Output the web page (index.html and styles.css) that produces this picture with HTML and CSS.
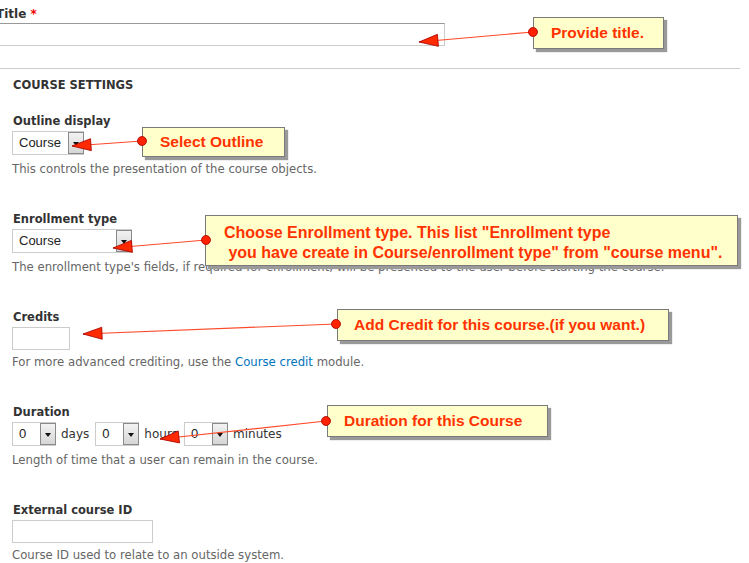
FILE: index.html
```html
<!DOCTYPE html>
<html lang="en">
<head>
    <meta charset="UTF-8">
    <title>Course settings</title>
    <link rel="stylesheet" href="styles.css">
</head>
<body>
    <div class="page">
        <div class="title-item">
            <label class="title-label">Title <span class="req">*</span></label>
            <input type="text" class="text title-input">
        </div>

        <div class="settings">
            <div class="legend">Course settings</div>

            <div class="form-item">
                <label class="label">Outline display</label>
                <div class="select select-small">
                    <span class="select-value">Course</span>
                    <span class="select-button"></span>
                </div>
                <div class="description">This controls the presentation of the course objects.</div>
            </div>

            <div class="form-item">
                <label class="label">Enrollment type</label>
                <div class="select select-wide">
                    <span class="select-value">Course</span>
                    <span class="select-button"></span>
                </div>
                <div class="description">The enrollment type's fields, if required for enrollment, will be presented to the user before starting the course.</div>
            </div>

            <div class="form-item form-item-text">
                <label class="label">Credits</label>
                <input type="text" class="text credits-input">
                <div class="description">For more advanced crediting, use the <a href="#">Course credit</a> module.</div>
            </div>

            <div class="form-item">
                <label class="label">Duration</label>
                <div class="duration">
                    <div class="select select-num">
                        <span class="select-value">0</span>
                        <span class="select-button"></span>
                    </div>
                    <span class="suffix">days</span>
                    <div class="select select-num">
                        <span class="select-value">0</span>
                        <span class="select-button"></span>
                    </div>
                    <span class="suffix">hours</span>
                    <div class="select select-num">
                        <span class="select-value">0</span>
                        <span class="select-button"></span>
                    </div>
                    <span class="suffix">minutes</span>
                </div>
                <div class="description">Length of time that a user can remain in the course.</div>
            </div>

            <div class="form-item form-item-text">
                <label class="label">External course ID</label>
                <input type="text" class="text external-input">
                <div class="description">Course ID used to relate to an outside system.</div>
            </div>
        </div>

        <!-- annotations -->
        <div class="callout callout-title">Provide title.</div>
        <div class="callout callout-outline">Select Outline</div>
        <div class="callout callout-enroll">Choose Enrollment type. This list "Enrollment type<br>&nbsp;you have create in Course/enrollment type" from "course menu".</div>
        <div class="callout callout-credits">Add Credit for this course.(if you want.)</div>
        <div class="callout callout-duration">Duration for this Course</div>

        <svg class="arrows" width="749" height="563" viewBox="0 0 749 563">
            <defs>
                <marker id="head" markerUnits="userSpaceOnUse" viewBox="0 0 19 12" refX="19" refY="6" markerWidth="19" markerHeight="12" orient="auto" overflow="visible">
                    <path d="M0,0 L19,6 L0,12 z" fill="#ff2a00" stroke="#a80000" stroke-width="0.8"/>
                </marker>
            </defs>
            <g stroke="#ff4a2a" stroke-width="1.2" fill="none">
                <line x1="533" y1="32" x2="419" y2="42" marker-end="url(#head)"/>
                <line x1="142" y1="141" x2="72" y2="146" marker-end="url(#head)"/>
                <line x1="206" y1="240" x2="113" y2="248" marker-end="url(#head)"/>
                <line x1="336" y1="324" x2="83" y2="334" marker-end="url(#head)"/>
                <line x1="326" y1="421" x2="160" y2="439" marker-end="url(#head)"/>
            </g>
            <g fill="#ff2200" stroke="#a00000" stroke-width="0.8">
                <circle cx="533" cy="32" r="4.5"/>
                <circle cx="142" cy="141" r="4.5"/>
                <circle cx="206" cy="240" r="4.5"/>
                <circle cx="336" cy="324" r="4.5"/>
                <circle cx="326" cy="421" r="4.5"/>
            </g>
        </svg>
    </div>
</body>
</html>
```

FILE: styles.css
```css
body {
    margin: 0;
    background-color: white;
    font-family: "DejaVu Sans", Verdana, sans-serif;
    color: #333;
}
.page {
    position: relative;
    width: 749px;
    height: 563px;
    overflow: hidden;
    padding-top: 5px;
    box-sizing: border-box;
}
.title-item {
    margin-left: -4px;
}
.title-label {
    display: block;
    font-size: 12px;
    font-weight: bold;
    line-height: 18px;
}
.req {
    color: #e00;
}
input.text {
    display: block;
    box-sizing: border-box;
    margin: 0;
    padding: 2px 4px;
    border: 1px solid #ccc;
    background-color: white;
    font-size: 13px;
}
.title-input {
    margin-left: -8px !important;
    width: 457px;
    height: 23px;
    border-top-color: #999 !important;
}
.settings {
    width: 740px;
    border-top: 1px solid #ccc;
    margin-top: 22px;
    padding: 7px 0 0 12px;
    box-sizing: border-box;
}
.legend {
    font-size: 11.5px;
    font-weight: bold;
    text-transform: uppercase;
    line-height: 18px;
    margin-left: 1px;
    margin-bottom: 18px;
}
.form-item {
    margin-bottom: 33px;
}
.label {
    display: block;
    font-size: 11.5px;
    font-weight: bold;
    line-height: 18px;
    margin-bottom: 1px;
    margin-left: 1px;
}
.description {
    font-size: 11.7px;
    line-height: 16px;
    color: #666;
    margin-top: 6px;
    white-space: nowrap;
}
.form-item-text .description {
    margin-top: 4px;
}
.description a {
    color: #0074bd;
    text-decoration: none;
}
.credits-input {
    width: 58px;
    height: 23px;
}
.external-input {
    width: 141px;
    height: 23px;
}
.select {
    display: flex;
    box-sizing: border-box;
    height: 24px;
    border: 1px solid #ccc;
    border-right: none;
    background-color: white;
    font-family: "Liberation Sans", Arial, sans-serif;
    font-size: 13px;
    color: #222;
}
.select-value {
    flex: 1;
    line-height: 22px;
    padding-left: 6px;
}
.select-button {
    position: relative;
    width: 16px;
    box-sizing: border-box;
    border: 1px solid #8a8a8a;
    background: linear-gradient(#f2f2f2, #d6d6d6);
}
.select-button::after {
    content: "";
    position: absolute;
    left: 4px;
    top: 9px;
    border-left: 3.5px solid transparent;
    border-right: 3.5px solid transparent;
    border-top: 4px solid #111;
}
.select-small {
    width: 72px;
}
.select-wide {
    width: 120px;
}
.select-num {
    width: 44px;
}
.duration {
    display: flex;
    align-items: center;
}
.suffix {
    font-size: 12px;
    margin: 0 6px 0 5px;
}
.callout {
    position: absolute;
    box-sizing: border-box;
    background-color: #ffffcc;
    border: 1px solid #7a7a7a;
    box-shadow: 3px 3px 1px #9a9a9a;
    font-family: "Liberation Sans", Arial, sans-serif;
    font-weight: bold;
    font-size: 15.5px;
    color: #ff3300;
    line-height: 30px;
    padding-left: 16px;
    white-space: nowrap;
}
.callout-title {
    left: 533px;
    top: 17px;
    width: 131px;
    height: 32px;
    padding-left: 17px;
}
.callout-outline {
    left: 142px;
    top: 127px;
    width: 143px;
    height: 30px;
    line-height: 28px;
    padding-left: 17px;
}
.callout-enroll {
    left: 205px;
    top: 215px;
    width: 533px;
    height: 51px;
    font-size: 16px;
    line-height: 20px;
    padding-top: 7px;
    padding-left: 18px;
}
.callout-credits {
    left: 337px;
    top: 309px;
    width: 332px;
    height: 32px;
}
.callout-duration {
    left: 327px;
    top: 405px;
    width: 221px;
    height: 32px;
}
.arrows {
    position: absolute;
    left: 0;
    top: 0;
    pointer-events: none;
}
```
